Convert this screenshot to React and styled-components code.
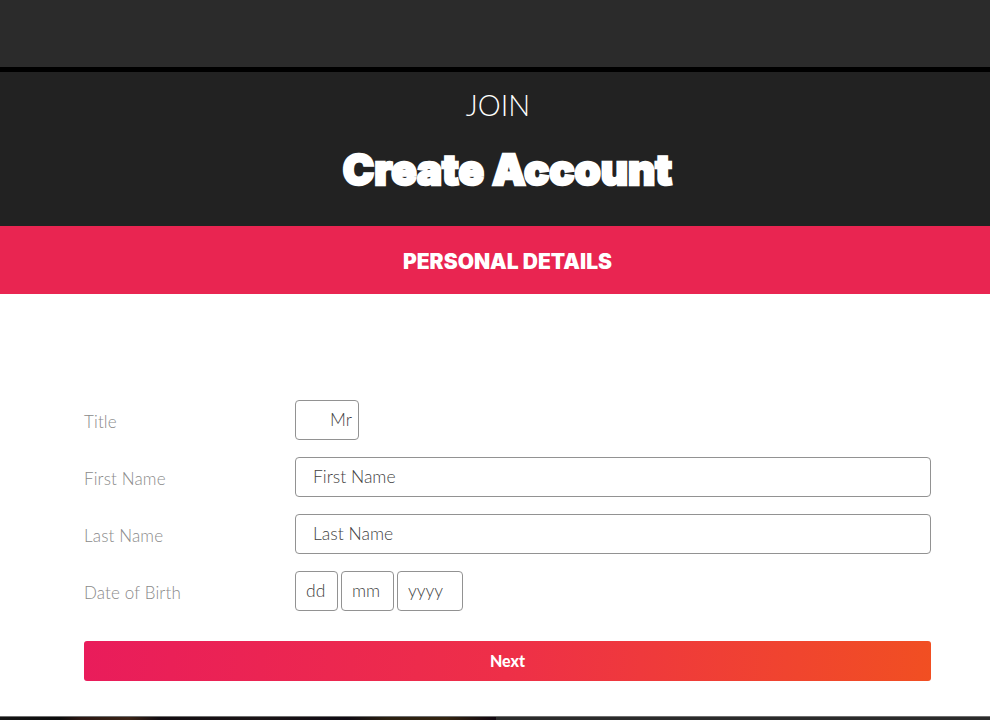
import React from "react";
import styled, { createGlobalStyle } from "styled-components";

const Global = createGlobalStyle`
  html, body { margin: 0; padding: 0; background: #fff; }
  body { font-family: "Lato", "Liberation Sans", sans-serif; overflow: hidden; }
`;
const Page = styled.div`
  height: 720px; display: flex; flex-direction: column; overflow: hidden;
`;
const TopBar = styled.div`
  height: 67px; flex: none; background: #2b2b2b; border-bottom: 5px solid #000;
`;
const Hero = styled.header`
  height: 154px; flex: none; box-sizing: border-box; padding: 0 59px 0 84px; background: #222222;
  display: flex; flex-direction: column; align-items: center; color: #fff;
`;
const Join = styled.div`
  font-size: 29px; font-weight: 300; line-height: 36px; margin-top: 15px; padding-right: 19px;
`;
const Title = styled.h1`
  margin: 22px 0 0; font-family: "Inter", sans-serif; font-size: 42px; font-weight: 900; line-height: 50px;
  -webkit-text-stroke: 2.5px #fff; paint-order: stroke fill; letter-spacing: 0; stroke-linejoin: round;
`;
const Banner = styled.div`
  height: 68px; flex: none; box-sizing: border-box; padding: 3px 59px 0 84px; background: #e92551; color: #fff;
  display: flex; align-items: center; justify-content: center;
  font-family: "Inter", sans-serif; font-size: 21px; font-weight: 900;
`;
const Form = styled.form`
  flex: none; height: 422px; box-sizing: border-box; padding: 106px 59px 0 84px; display: flex; flex-direction: column;
`;
const Row = styled.div`
  display: grid; grid-template-columns: 211px 1fr; align-items: center; height: 40px; margin-bottom: 17px;
`;
const Label = styled.label`
  font-size: 17px; font-weight: 300; color: #8a8a8a; padding-top: 2px; letter-spacing: 0.15px;
`;
const Group = styled.div`
  display: flex; gap: 3px;
`;
const Input = styled.input`
  box-sizing: border-box; height: 40px; width: ${p => p.$w ? `${p.$w}px` : "100%"};
  border: 1px solid #929292; border-radius: 4px; background: #fff; outline: none;
  padding: 0 ${p => p.$pad ?? 17}px 2px; font: 300 17.5px "Lato", sans-serif; color: #3f3f3f;
  &::placeholder { color: #3f3f3f; opacity: 1; }
`;
const Select = styled.select`
  appearance: none; box-sizing: border-box; height: 40px; width: 64px; border: 1px solid #929292; border-radius: 4px;
  background: #fff; padding: 0 0 2px 34px; font: 300 17.5px "Lato", sans-serif; color: #3f3f3f; outline: none;
`;
const Next = styled.button`
  margin-top: 13px; height: 40px; width: 100%; border: 0; border-radius: 3px; color: #fff; padding: 0 0 2px;
  background: linear-gradient(95deg, #e91c5b 0%, #ee2f48 50%, #f14f22 100%);
  font: 900 16px "Lato", sans-serif;
`;
const Bottom = styled.div`
  flex: 1; display: flex; border-top: 1px solid #6f6f6f;
`;
const Backdrop = styled.div`
  width: 496px; flex: none;
  background: linear-gradient(90deg, #141414 0%, #0c0c0c 12%, #2a1712 16%, #3a2316 26%, #120c10 32%, #1a1416 52%, #0f0a12 70%, #2a1f10 78%, #33240f 90%, #10060f 100%);
`;
const BackdropRest = styled.div`
  flex: 1; background: #2b2b2b;
`;

export default function App() {
  return (
    <Page>
      <Global />
      <TopBar />
      <Hero>
        <Join>JOIN</Join>
        <Title>Create Account</Title>
      </Hero>
      <Banner>PERSONAL DETAILS</Banner>
      <Form onSubmit={e => e.preventDefault()}>
        <Row>
          <Label>Title</Label>
          <Select defaultValue="Mr"><option>Mr</option><option>Mrs</option><option>Ms</option></Select>
        </Row>
        <Row>
          <Label>First Name</Label>
          <Input placeholder="First Name" />
        </Row>
        <Row>
          <Label>Last Name</Label>
          <Input placeholder="Last Name" />
        </Row>
        <Row>
          <Label>Date of Birth</Label>
          <Group>
            <Input $w={43} $pad={10} placeholder="dd" />
            <Input $w={53} $pad={10} placeholder="mm" />
            <Input $w={66} $pad={10} placeholder="yyyy" />
          </Group>
        </Row>
        <Next type="submit">Next</Next>
      </Form>
      <Bottom>
        <Backdrop />
        <BackdropRest />
      </Bottom>
    </Page>
  );
}
